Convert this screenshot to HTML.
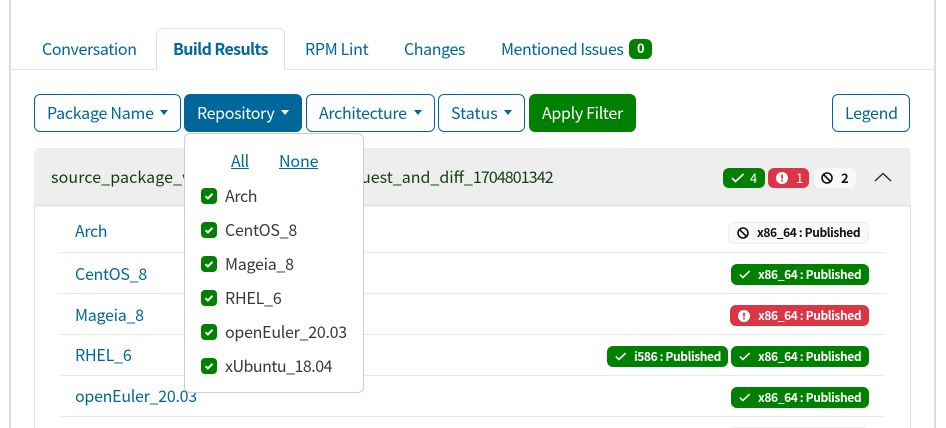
<!DOCTYPE html>
<html lang="en"><head><meta charset="utf-8"><title>Build Results</title>
<style>
html,body{margin:0;padding:0;background:#fff;width:946px;height:428px;overflow:hidden}
#w{position:absolute;left:0;top:0;width:946px;height:428px;overflow:hidden;font-family:"Noto Sans CJK JP","Liberation Sans",sans-serif;font-size:16px;color:#00679a}
.a{position:absolute;box-sizing:border-box}
.t{position:absolute;white-space:nowrap;line-height:20px;height:20px}
.btn{position:absolute;box-sizing:border-box;height:38px;top:94px;border:1px solid #00679a;border-radius:6px;background:#fff}
.car{position:absolute;width:0;height:0;border-left:4.5px solid transparent;border-right:4.5px solid transparent;border-top:5px solid #00679a;top:110px}
.sep{position:absolute;left:59px;width:826px;height:1px;background:#e9e9e9}
.b{position:absolute;box-sizing:border-box;border-radius:6px;color:#fff}
.g{background:#008000}.r{background:#dc3545}.l{background:#f8f9fa;border:1px solid #eceef1;color:#111}
.bt{position:absolute;white-space:nowrap;font-size:12px;font-weight:700;line-height:18px;height:18px;color:#fff;letter-spacing:-.4px}
.n{font-size:13px;letter-spacing:0}
.cb{position:absolute;left:201px;width:16px;height:16px;border-radius:4px;background:#008000}
.cb svg{position:absolute;left:3px;top:3px}
.dd{color:#343a40}
svg{position:absolute;overflow:visible}
</style></head><body><div id="w">
<div class="a" style="left:9px;top:0;width:2px;height:428px;background:#ddd"></div>
<div class="a" style="left:934px;top:0;width:2px;height:428px;background:#ddd"></div>
<div class="a" style="left:10px;top:69px;width:925px;height:1px;background:#e6e6e6"></div>
<div class="a" style="left:156px;top:28px;width:129px;height:42px;background:#fff;border:1px solid #dee2e6;border-bottom:0;border-radius:6px 6px 0 0"></div>
<span class="t" style="left:42px;top:38px;letter-spacing:-.37px">Conversation</span>
<span class="t" style="left:173px;top:38px;font-weight:700;letter-spacing:-.6px">Build Results</span>
<span class="t" style="left:305px;top:38px;letter-spacing:-.3px">RPM Lint</span>
<span class="t" style="left:404px;top:38px;letter-spacing:-.4px">Changes</span>
<span class="t" style="left:501px;top:38px;letter-spacing:-.45px">Mentioned Issues</span>
<div class="b g" style="left:629px;top:39px;width:23px;height:20px"></div>
<span class="bt n" style="left:637px;top:39px">0</span>

<div class="btn" style="left:34px;width:147px"></div>
<span class="t" style="left:47px;top:102px;letter-spacing:-.25px">Package Name</span>
<div class="car" style="left:160px"></div>
<div class="btn" style="left:184px;width:118px;background:#00679a;"></div>
<span class="t" style="left:197px;top:102px;color:#fff;letter-spacing:-.35px">Repository</span>
<div class="car" style="left:281px;border-top-color:#fff"></div>
<div class="btn" style="left:306px;width:129px"></div>
<span class="t" style="left:319px;top:102px;letter-spacing:-.3px">Architecture</span>
<div class="car" style="left:414px"></div>
<div class="btn" style="left:438px;width:87px"></div>
<span class="t" style="left:451px;top:102px;letter-spacing:0">Status</span>
<div class="car" style="left:504px"></div>
<div class="btn" style="left:529px;width:107px;background:#008000;border-color:#008000"></div>
<span class="t" style="left:542px;top:102px;color:#fff;letter-spacing:-.32px">Apply Filter</span>
<div class="btn" style="left:832px;width:78px"></div>
<span class="t" style="left:845px;top:102px;letter-spacing:-.3px">Legend</span>

<div class="a" style="left:34px;top:148px;width:877px;height:290px;border:1px solid #dee2e6;border-radius:6px 6px 0 0"></div>
<div class="a" style="left:34px;top:148px;width:877px;height:56px;background:#eee;border-radius:6px 6px 0 0"></div>
<div class="a" style="left:34px;top:204px;width:877px;height:3px;background:#e6eaed"></div>
<span class="t" style="left:51px;top:166px;color:#123f12;letter-spacing:.1px">source_package_with</span>
<span class="t" style="left:361px;top:166px;color:#123f12;letter-spacing:0">uest_and_diff_<span style="letter-spacing:-.9px">1704801342</span></span>

<div class="b g" style="left:723px;top:168px;width:42px;height:20px"></div>
<svg style="left:731px;top:173px" width="14" height="10" viewBox="0 0 14 10"><path d="M1 5l3.5 3.5L12.5 1" fill="none" stroke="#fff" stroke-width="1.6"/></svg>
<span class="bt n" style="left:750px;top:169px;font-weight:400">4</span>
<div class="b r" style="left:768px;top:168px;width:41px;height:20px"></div>
<svg style="left:776px;top:172px" width="12" height="12" viewBox="0 0 12 12"><circle cx="6" cy="6" r="6" fill="#fff"/><rect x="5.1" y="2.6" width="1.8" height="4.2" rx=".5" fill="#dc3545"/><circle cx="6" cy="8.6" r="1" fill="#dc3545"/></svg>
<span class="bt n" style="left:796px;top:169px;font-weight:400">1</span>
<div class="b" style="left:814px;top:168px;width:42px;height:20px;background:#f8f9fa"></div>
<svg style="left:821px;top:172px" width="12" height="12" viewBox="0 0 12 12"><circle cx="6" cy="6" r="5" fill="none" stroke="#111" stroke-width="1.6"/><path d="M2.5 2.5l7 7" stroke="#111" stroke-width="1.6"/></svg>
<span class="bt n" style="left:841px;top:169px;color:#111">2</span>
<svg style="left:874px;top:171px" width="18" height="10" viewBox="0 0 18 10"><path d="M1 10L9 2.5l8 7.5" fill="none" stroke="#123f12" stroke-width="1.4"/></svg>

<span class="t" style="left:75px;top:220px;letter-spacing:-.4px">Arch</span>
<span class="t" style="left:75px;top:263px;letter-spacing:-.27px">CentOS_8</span>
<span class="t" style="left:75px;top:304px;letter-spacing:-.27px">Mageia_8</span>
<span class="t" style="left:75px;top:344px;letter-spacing:-.2px">RHEL_6</span>
<span class="t" style="left:75px;top:385px;letter-spacing:-.27px">openEuler_20.03</span>
<div class="sep" style="top:252px"></div><div class="sep" style="top:293px"></div><div class="sep" style="top:334px"></div><div class="sep" style="top:375px"></div><div class="sep" style="top:416px"></div>

<div class="b l" style="left:728px;top:222px;width:141px;height:22px"></div>
<svg style="left:737px;top:227px" width="12" height="12" viewBox="0 0 12 12"><circle cx="6" cy="6" r="5" fill="none" stroke="#111" stroke-width="1.6"/><path d="M2.5 2.5l7 7" stroke="#111" stroke-width="1.6"/></svg>
<span class="bt" style="left:757px;top:224px;color:#111">x86_64 : Published</span>

<div class="b g" style="left:731px;top:264px;width:138px;height:21px"></div>
<svg style="left:739px;top:270px" width="12" height="9" viewBox="0 0 14 10"><path d="M1 5l3.5 3.5L12.5 1" fill="none" stroke="#fff" stroke-width="1.8"/></svg>
<span class="bt" style="left:758px;top:266px">x86_64 : Published</span>

<div class="b r" style="left:730px;top:305px;width:139px;height:21px"></div>
<svg style="left:738px;top:310px" width="12" height="12" viewBox="0 0 12 12"><circle cx="6" cy="6" r="6" fill="#fff"/><rect x="5.1" y="2.6" width="1.8" height="4.2" rx=".5" fill="#dc3545"/><circle cx="6" cy="8.6" r="1" fill="#dc3545"/></svg>
<span class="bt" style="left:758px;top:307px">x86_64 : Published</span>

<div class="b g" style="left:607px;top:346px;width:121px;height:21px"></div>
<svg style="left:615px;top:352px" width="12" height="9" viewBox="0 0 14 10"><path d="M1 5l3.5 3.5L12.5 1" fill="none" stroke="#fff" stroke-width="1.8"/></svg>
<span class="bt" style="left:634px;top:348px">i586 : Published</span>
<div class="b g" style="left:731px;top:346px;width:138px;height:21px"></div>
<svg style="left:739px;top:352px" width="12" height="9" viewBox="0 0 14 10"><path d="M1 5l3.5 3.5L12.5 1" fill="none" stroke="#fff" stroke-width="1.8"/></svg>
<span class="bt" style="left:758px;top:348px">x86_64 : Published</span>

<div class="b g" style="left:731px;top:387px;width:138px;height:21px"></div>
<svg style="left:739px;top:393px" width="12" height="9" viewBox="0 0 14 10"><path d="M1 5l3.5 3.5L12.5 1" fill="none" stroke="#fff" stroke-width="1.8"/></svg>
<span class="bt" style="left:758px;top:389px">x86_64 : Published</span>
<div class="b l" style="left:728px;top:427px;width:141px;height:22px"></div>

<div class="a" style="left:184px;top:133px;width:180px;height:260px;background:#fff;border:1px solid #cfcfcf;border-radius:6px"></div>
<span class="t" style="left:231px;top:150px;text-decoration:underline;letter-spacing:-.35px">All</span>
<span class="t" style="left:279px;top:150px;text-decoration:underline;letter-spacing:-.15px">None</span>

<div class="cb" style="top:188px"><svg width="10" height="10" viewBox="0 0 10 10"><path d="M1.5 5.2l2.4 2.3L8.5 2.8" fill="none" stroke="#fff" stroke-width="2"/></svg></div>
<span class="t dd" style="left:225px;top:185px;letter-spacing:-.4px">Arch</span>
<div class="cb" style="top:222px"><svg width="10" height="10" viewBox="0 0 10 10"><path d="M1.5 5.2l2.4 2.3L8.5 2.8" fill="none" stroke="#fff" stroke-width="2"/></svg></div>
<span class="t dd" style="left:225px;top:219px;letter-spacing:-.27px">CentOS_8</span>
<div class="cb" style="top:256px"><svg width="10" height="10" viewBox="0 0 10 10"><path d="M1.5 5.2l2.4 2.3L8.5 2.8" fill="none" stroke="#fff" stroke-width="2"/></svg></div>
<span class="t dd" style="left:225px;top:253px;letter-spacing:-.27px">Mageia_8</span>
<div class="cb" style="top:290px"><svg width="10" height="10" viewBox="0 0 10 10"><path d="M1.5 5.2l2.4 2.3L8.5 2.8" fill="none" stroke="#fff" stroke-width="2"/></svg></div>
<span class="t dd" style="left:225px;top:287px;letter-spacing:-.2px">RHEL_6</span>
<div class="cb" style="top:324px"><svg width="10" height="10" viewBox="0 0 10 10"><path d="M1.5 5.2l2.4 2.3L8.5 2.8" fill="none" stroke="#fff" stroke-width="2"/></svg></div>
<span class="t dd" style="left:225px;top:321px;letter-spacing:-.27px">openEuler_20.03</span>
<div class="cb" style="top:358px"><svg width="10" height="10" viewBox="0 0 10 10"><path d="M1.5 5.2l2.4 2.3L8.5 2.8" fill="none" stroke="#fff" stroke-width="2"/></svg></div>
<span class="t dd" style="left:225px;top:355px;letter-spacing:-.5px">xUbuntu_18.04</span>
</div></body></html>
